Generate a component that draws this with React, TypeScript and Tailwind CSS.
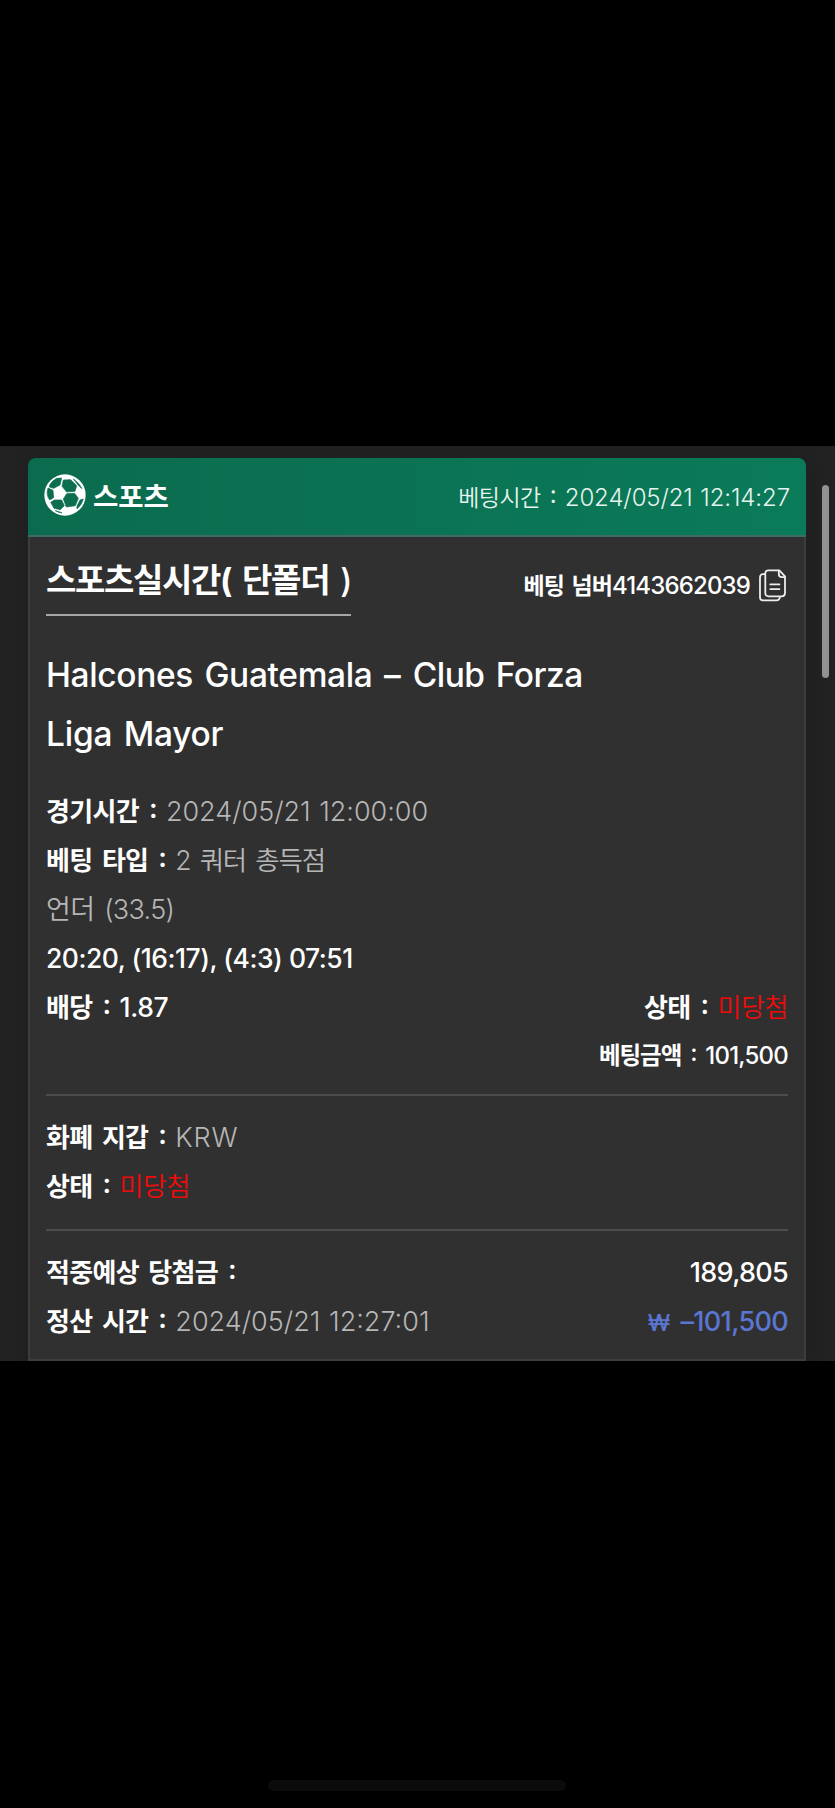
import type { ReactNode } from 'react';

type TextProps = { children: ReactNode; className?: string };

function Label({ children, className = '' }: TextProps) {
  return (
    <span className={`text-[26px] font-bold tracking-[-0.7px] [word-spacing:4px] ${className}`}>{children}</span>
  );
}

function Colon() {
  return <span className="mr-[9px] ml-[10px] w-[8px] -translate-y-[3px] text-[27px] font-semibold">:</span>;
}

function Value({ children, className = '' }: TextProps) {
  return <span className={`font-[350] text-[#b6b6b6] ${className}`}>{children}</span>;
}

function Lost() {
  return <span className="text-[26px] font-[350] tracking-[-0.4px] text-[#f00a0a]">미당첨</span>;
}

function Row({ children, className = '' }: TextProps) {
  return <div className={`flex h-[49px] items-baseline leading-[49px] ${className}`}>{children}</div>;
}

function SoccerBall() {
  return (
    <svg viewBox="0 0 126 126" className="h-[42px] w-[42px] shrink-0">
      <circle cx="63" cy="63" r="62" fill="#fff" />
      <g fill="#0b6e50" stroke="#0b6e50" strokeWidth="2" strokeLinejoin="round">
        <path d="M18 31 Q26 19 38 13 L53 12 L48 33 L29 43 L16 39 Z" />
        <path d="M58 18 L80 17 L98 35 L93 52 L68 54 L54 37 Z" />
        <path d="M12 42 L27 49 L29 71 L17 78 Q5 62 12 42 Z" />
        <path d="M31 78 L53 78 L61 95 L49 107 L30 103 L20 85 Z" />
        <path d="M58 75 L68 59 L92 58 L103 73 L94 95 L67 99 Z" />
        <path d="M88 15 Q106 27 114 44 L103 34 Z" />
        <path d="M118 75 Q113 93 99 105 L99 96 L108 78 Z" />
        <path d="M34 110 L48 114 L54 117 Q44 116 34 110 Z" />
      </g>
    </svg>
  );
}

function CopyIcon() {
  return (
    <svg viewBox="0 0 28 33" className="h-[33px] w-[28px] shrink-0" fill="none" stroke="#ededed" strokeWidth="1.8" strokeLinejoin="round" strokeLinecap="round">
      <path d="M9.6 1.3H20.3L26 7.3V24Q26 27.3 22.7 27.3H9.6Q6.3 27.3 6.3 24V4.6Q6.3 1.3 9.6 1.3Z" />
      <path d="M19.8 1.6V5Q19.8 8.2 23 8.2H25.8" />
      <path d="M6 5.2H4Q1 5.2 1 8.4V28.2Q1 31.3 4 31.3H17.5Q20.4 31.3 21 27.8" />
      <path d="M11.3 15.4H20.4M11.3 20.1H20.4" />
    </svg>
  );
}

export default function App() {
  return (
    <div className="flex h-[1808px] w-[835px] flex-col bg-black font-['Inter','Noto_Sans_CJK_KR',sans-serif] whitespace-nowrap text-white">
      <main className="mt-[446px] flex h-[915px] items-start overflow-hidden bg-[#222222] pt-[12px] pl-[28px]">
        <article className="flex h-[903px] w-[778px] flex-col rounded-t-[8px] shadow-[0_0_10px_2px_rgba(30,31,36,0.8)]">
          <header className="flex h-[79px] items-center rounded-t-[8px] border-b-2 border-[#3f6a66] bg-linear-to-r from-[#0b6b4e] to-[#0a7b59] pr-[16px] pl-[16px]">
            <div className="-mt-[4px] flex items-center">
              <SoccerBall />
              <span className="mt-[4px] ml-[7px] text-[27.5px] leading-[40px] font-bold">스포츠</span>
            </div>
            <div className="mt-[2px] ml-auto flex items-baseline leading-[40px] font-[350] text-[#e6f3ee]">
              <span className="text-[23px] tracking-[-0.5px]">베팅시간</span>
              <span className="mr-[7px] ml-[9px] w-[8px] -translate-y-[3px] text-[24px] font-normal">:</span>
              <span className="text-[24px] tracking-[-0.1px] [word-spacing:1px]">2024/05/21 12:14:27</span>
            </div>
          </header>

          <div className="flex-1 border-2 border-t-0 border-[#3c3d40] bg-[#303030] px-[16px]">
            <div className="flex h-[119px] items-start justify-between">
              <h1 className="mt-[14px] h-[65px] w-[305px] border-b-2 border-[#a6a6a6] text-[33px] leading-[59px] font-bold tracking-[-1.35px] [word-spacing:4.5px]">
                스포츠실시간( 단폴더 <span className="font-medium">)</span>
              </h1>
              <div className="mt-[30px] flex items-start leading-[38px]">
                <div className="flex items-baseline">
                  <span className="text-[23px] font-bold tracking-[-0.95px] [word-spacing:3px]">베팅 넘버</span>
                  <span className="text-[24px] font-medium tracking-[-0.85px]">4143662039</span>
                </div>
                <span className="mt-[2px] mr-[1px] ml-[9px] flex"><CopyIcon /></span>
              </div>
            </div>

            <h2 className="-mt-[10px] text-[33.5px] leading-[59px] font-medium tracking-[-0.35px] [word-spacing:2.8px]">
              Halcones Guatemala <span className="mr-[1px] inline-block">–</span> <span className="tracking-[-0.5px]">Club Forza</span>
              <br />
              <span className="tracking-[-0.25px]">Liga Mayor</span>
            </h2>

            <section className="mt-[23px]">
              <Row>
                <Label>경기시간</Label>
                <Colon />
                <Value className="text-[27px] tracking-[-0.03px] [word-spacing:1px]">2024/05/21 12:00:00</Value>
              </Row>
              <Row>
                <Label>베팅 타입</Label>
                <Colon />
                <Value className="text-[26.5px] tracking-[-1.2px] [word-spacing:3px]">2 쿼터 총득점</Value>
              </Row>
              <Row>
                <Value className="text-[27px] tracking-[-0.7px] [word-spacing:3px]">언더 (33.5)</Value>
              </Row>
              <Row>
                <span className="text-[26.5px] font-medium tracking-[-0.5px]">20:20, (16:17), (4:3) 07:51</span>
              </Row>
              <Row>
                <Label>배당</Label>
                <Colon />
                <span className="text-[26.5px] font-medium tracking-[-0.3px]">1.87</span>
                <Label className="ml-auto">상태</Label>
                <Colon />
                <Lost />
              </Row>
              <Row className="-mt-px h-[48px]! justify-end font-medium">
                <span className="text-[23.5px] font-bold tracking-[-1px]">베팅금액</span>
                <span className="mr-[7px] ml-[9px] w-[8px] -translate-y-[3px] text-[24px]">:</span>
                <span className="text-[24px] tracking-[-0.8px]">101,500</span>
              </Row>
            </section>

            <section className="mt-[15px] h-[135px] border-t-2 border-[#4c4c4c] pt-[17px]">
              <Row>
                <Label>화폐 지갑</Label>
                <Colon />
                <Value className="text-[27px] tracking-[0.8px]">KRW</Value>
              </Row>
              <Row>
                <Label>상태</Label>
                <Colon />
                <Lost />
              </Row>
            </section>

            <section className="border-t-2 border-[#4c4c4c] pt-[17px]">
              <Row>
                <Label>적중예상 당첨금</Label>
                <Colon />
                <span className="ml-auto text-[27px] font-medium tracking-[-0.7px]">189,805</span>
              </Row>
              <Row>
                <Label>정산 시간</Label>
                <Colon />
                <Value className="text-[27px] tracking-[0px] [word-spacing:1px]">2024/05/21 12:27:01</Value>
                <span className="ml-auto flex items-baseline font-medium text-[#5b76d2]">
                  <span className="text-[23px]">₩</span>
                  <span className="ml-[10px] text-[27px] tracking-[-0.65px]">–101,500</span>
                </span>
              </Row>
            </section>
          </div>
        </article>
        <div className="mt-[27px] ml-[16px] h-[193px] w-[7px] rounded-full bg-[#929292]" />
      </main>
      <div className="mt-[419px] ml-[268px] h-[11px] w-[298px] rounded-full bg-[#0b0b0b]" />
    </div>
  );
}
